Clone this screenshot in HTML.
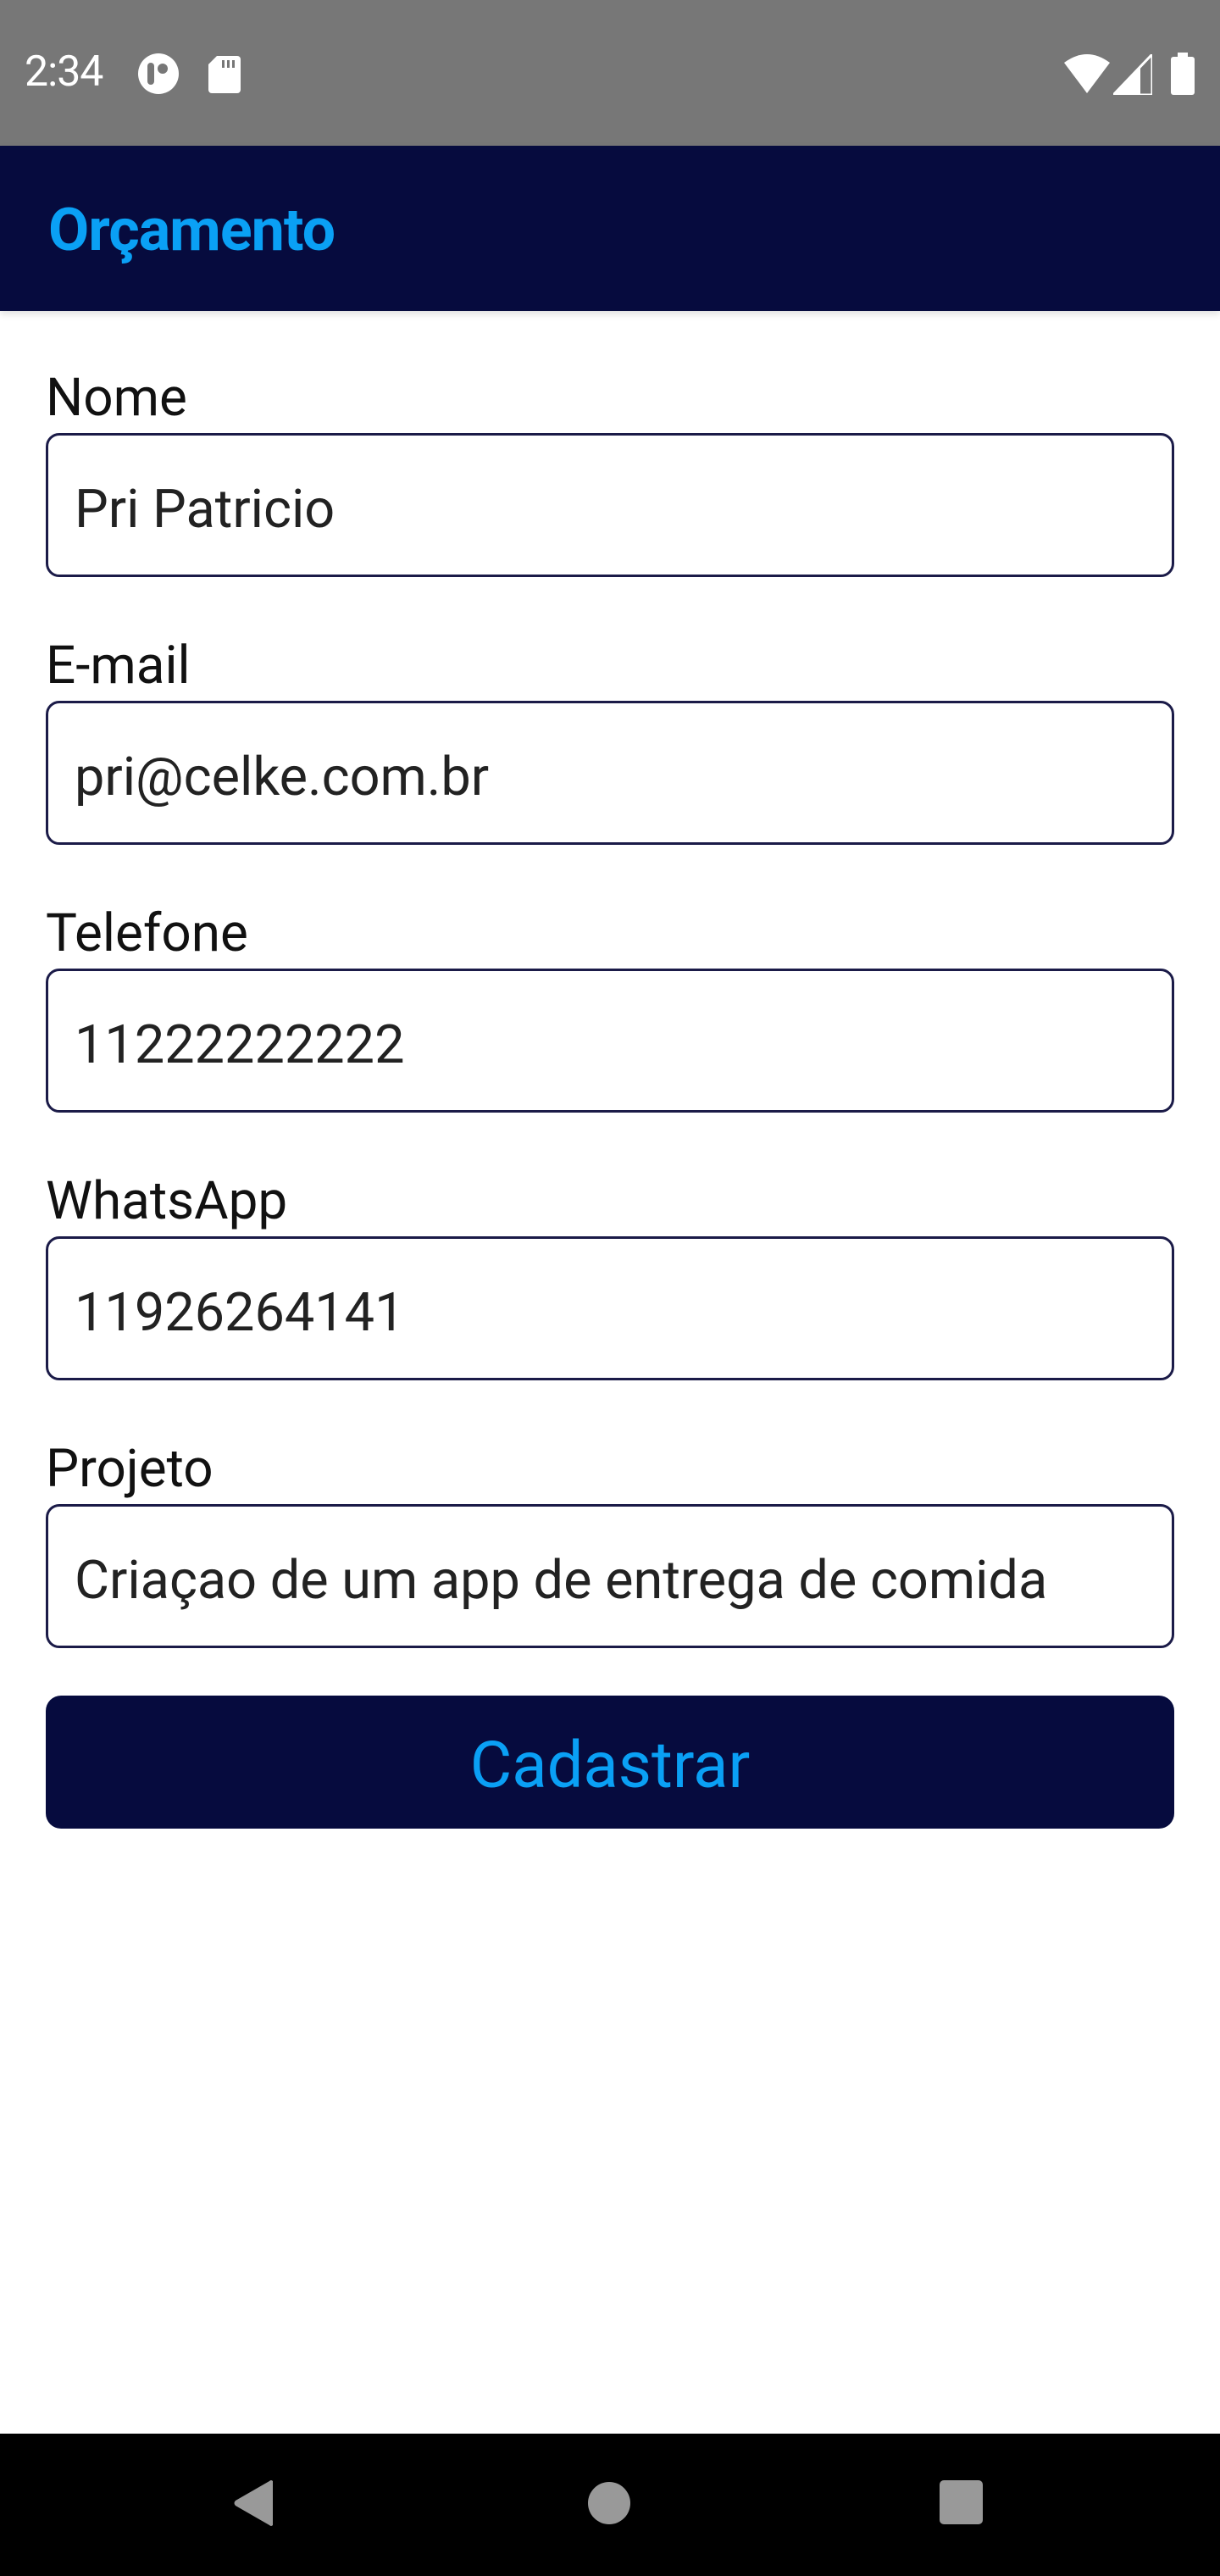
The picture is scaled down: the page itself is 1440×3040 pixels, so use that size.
<!DOCTYPE html>
<html><head><meta charset="utf-8"><style>
*{margin:0;padding:0;box-sizing:border-box}
body{width:1440px;height:3040px;background:#fff;font-family:"Roboto","Liberation Sans",sans-serif;position:relative;overflow:hidden}
.status{position:absolute;left:0;top:0;width:1440px;height:172px;background:#777}
.time{position:absolute;left:29px;top:56px;font-size:50px;color:#fff;letter-spacing:-1px}
.header{position:absolute;left:0;top:172px;width:1440px;height:195px;background:#060b3e;box-shadow:0 4px 8px rgba(0,0,0,.12)}
.title{position:absolute;left:57px;top:59px;font-size:70px;font-weight:bold;color:#0aa0f5;letter-spacing:-1px}
.label{position:absolute;left:54px;font-size:62px;color:#111}
.input{position:absolute;left:54px;width:1332px;height:170px;border:3px solid #1b1b48;border-radius:16px;font-size:63px;color:#222;padding-left:31px;line-height:176px}
.btn{position:absolute;left:54px;top:2001px;width:1332px;height:157px;background:#060b3e;border-radius:18px;color:#0aa0f5;font-size:76px;text-align:center;line-height:164px}
.nav{position:absolute;left:0;top:2872px;width:1440px;height:168px;background:#000}
</style></head><body>
<div class="status">
<div class="time">2:34</div>
<svg style="position:absolute;left:162px;top:62px" width="50" height="50" viewBox="0 0 50 50"><circle cx="25" cy="25" r="24" fill="#fff"/><rect x="12" y="12" width="8" height="26" rx="4" fill="#777"/><circle cx="30" cy="19" r="6" fill="#777"/></svg>
<svg style="position:absolute;left:246px;top:66px" width="38" height="44" viewBox="0 0 38 44"><path d="M10 0H34a4 4 0 0 1 4 4V40a4 4 0 0 1-4 4H4a4 4 0 0 1-4-4V10Z" fill="#fff"/><rect x="16" y="5" width="3" height="9" fill="#777"/><rect x="22" y="5" width="3" height="9" fill="#777"/><rect x="28" y="5" width="3" height="9" fill="#777"/></svg>
<svg style="position:absolute;left:1256px;top:64px" width="54" height="48" viewBox="0 0 54 48"><path d="M0 10Q27-10 54 10L27 46Z" fill="#fff"/></svg>
<svg style="position:absolute;left:1314px;top:64px" width="46" height="48" viewBox="0 0 46 48"><path d="M46 0V48H0Z" fill="none" stroke="#fff" stroke-width="3"/><path d="M32 14V48H0Z" fill="#fff"/></svg>
<svg style="position:absolute;left:1382px;top:62px" width="28" height="50" viewBox="0 0 28 50"><rect x="8" y="0" width="12" height="6" fill="#fff"/><rect x="0" y="5" width="28" height="45" rx="3" fill="#fff"/></svg>
</div>
<div class="header"><div class="title">Orçamento</div></div>

<div class="label" style="top:433px">Nome</div>
<div class="input" style="top:511px">Pri Patricio</div>
<div class="label" style="top:749px">E-mail</div>
<div class="input" style="top:827px">pri@celke.com.br</div>
<div class="label" style="top:1065px">Telefone</div>
<div class="input" style="top:1143px">11222222222</div>
<div class="label" style="top:1381px">WhatsApp</div>
<div class="input" style="top:1459px">11926264141</div>
<div class="label" style="top:1697px">Projeto</div>
<div class="input" style="top:1775px">Criaçao de um app de entrega de comida</div>
<div class="btn">Cadastrar</div>

<div class="nav">
<svg style="position:absolute;left:274px;top:54px" width="52" height="56" viewBox="0 0 52 56"><path d="M48 2V54Q46 56 44 54L4 31Q1 28 4 25L44 2Q46 0 48 2Z" fill="#999"/></svg>
<div style="position:absolute;left:694px;top:57px;width:50px;height:50px;border-radius:50%;background:#999"></div>
<div style="position:absolute;left:1109px;top:55px;width:51px;height:52px;border-radius:5px;background:#999"></div>
</div>
</body></html>
